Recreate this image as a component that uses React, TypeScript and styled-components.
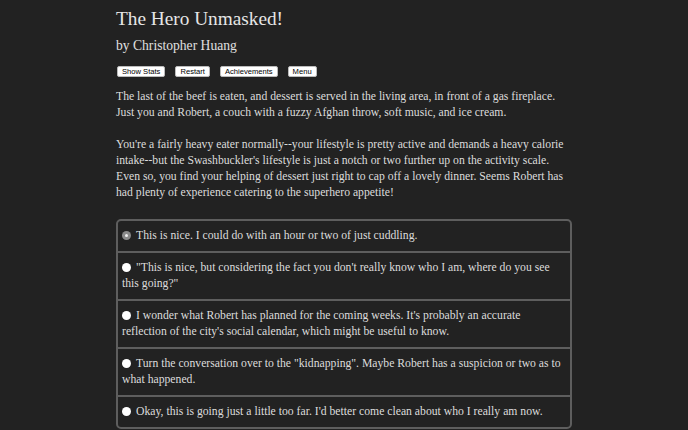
import React from "react";
import styled, { createGlobalStyle } from "styled-components";

const Global = createGlobalStyle`
  html, body { margin: 0; padding: 0; background: #222222; }
  body { font-family: "Liberation Serif", "DejaVu Serif", serif; color: #dcdcdc; }
`;

const Page = styled.div`
  width: 456px;
  margin: 0 auto;
  padding-top: 7px;
`;

const Title = styled.h1`
  margin: 0;
  font-size: 19.3px;
  font-weight: normal;
  line-height: 24px;
  color: #e6e6e6;
`;

const Byline = styled.h2`
  margin: 5px 0 0;
  font-size: 13.6px;
  font-weight: normal;
  line-height: 20px;
  color: #e0e0e0;
`;

const Toolbar = styled.div`
  display: flex;
  gap: 10px;
  margin-top: 10px;
  padding-left: 1px;
`;

const Button = styled.button`
  font-family: "Liberation Sans", Arial, sans-serif;
  font-size: 7.6px;
  line-height: 9px;
  padding: 0 4px;
  height: 11px;
  background: #ffffff;
  color: #000000;
  border: 1px solid #bbb;
  border-radius: 2px;
`;

const Text = styled.p`
  margin: 12px 0 0;
  font-size: 11.7px;
  line-height: 16px;
  & + & { margin-top: 16px; }
`;

const Choices = styled.div`
  margin-top: 18px;
  border: 2px solid #5e5e5e;
  border-radius: 5px;
  display: flex;
  flex-direction: column;
`;

const Choice = styled.label`
  display: block;
  padding: 7px 6px 7px 4px;
  font-size: 11.7px;
  line-height: 16px;
  border-top: 2px solid #5e5e5e;
  &:first-child { border-top: none; }
`;

const Radio = styled.span<{ $selected?: boolean }>`
  display: inline-block;
  width: 9px;
  height: 9px;
  border-radius: 50%;
  margin-right: 5px;
  vertical-align: -1px;
  background: ${(p) => (p.$selected ? "#8a8a8a" : "#ffffff")};
  position: relative;
  &::after {
    content: "";
    display: ${(p) => (p.$selected ? "block" : "none")};
    position: absolute;
    left: 3px;
    top: 3px;
    width: 3px;
    height: 3px;
    border-radius: 50%;
    background: #f0f0f0;
  }
`;

const choices = [
  "This is nice. I could do with an hour or two of just cuddling.",
  "\"This is nice, but considering the fact you don't really know who I am, where do you see this going?\"",
  "I wonder what Robert has planned for the coming weeks. It's probably an accurate reflection of the city's social calendar, which might be useful to know.",
  "Turn the conversation over to the \"kidnapping\". Maybe Robert has a suspicion or two as to what happened.",
  "Okay, this is going just a little too far. I'd better come clean about who I really am now.",
];

export default function App() {
  return (
    <>
      <Global />
      <Page>
        <Title>The Hero Unmasked!</Title>
        <Byline>by Christopher Huang</Byline>
        <Toolbar>
          <Button>Show Stats</Button>
          <Button>Restart</Button>
          <Button>Achievements</Button>
          <Button>Menu</Button>
        </Toolbar>
        <Text>
          The last of the beef is eaten, and dessert is served in the living area, in front of a gas fireplace. Just you and Robert, a couch with a fuzzy Afghan throw, soft music, and ice cream.
        </Text>
        <Text>
          You're a fairly heavy eater normally--your lifestyle is pretty active and demands a heavy calorie intake--but the Swashbuckler's lifestyle is just a notch or two further up on the activity scale. Even so, you find your helping of dessert just right to cap off a lovely dinner. Seems Robert has had plenty of experience catering to the superhero appetite!
        </Text>
        <Choices>
          {choices.map((c, i) => (
            <Choice key={i}>
              <Radio $selected={i === 0} />
              {c}
            </Choice>
          ))}
        </Choices>
      </Page>
    </>
  );
}
